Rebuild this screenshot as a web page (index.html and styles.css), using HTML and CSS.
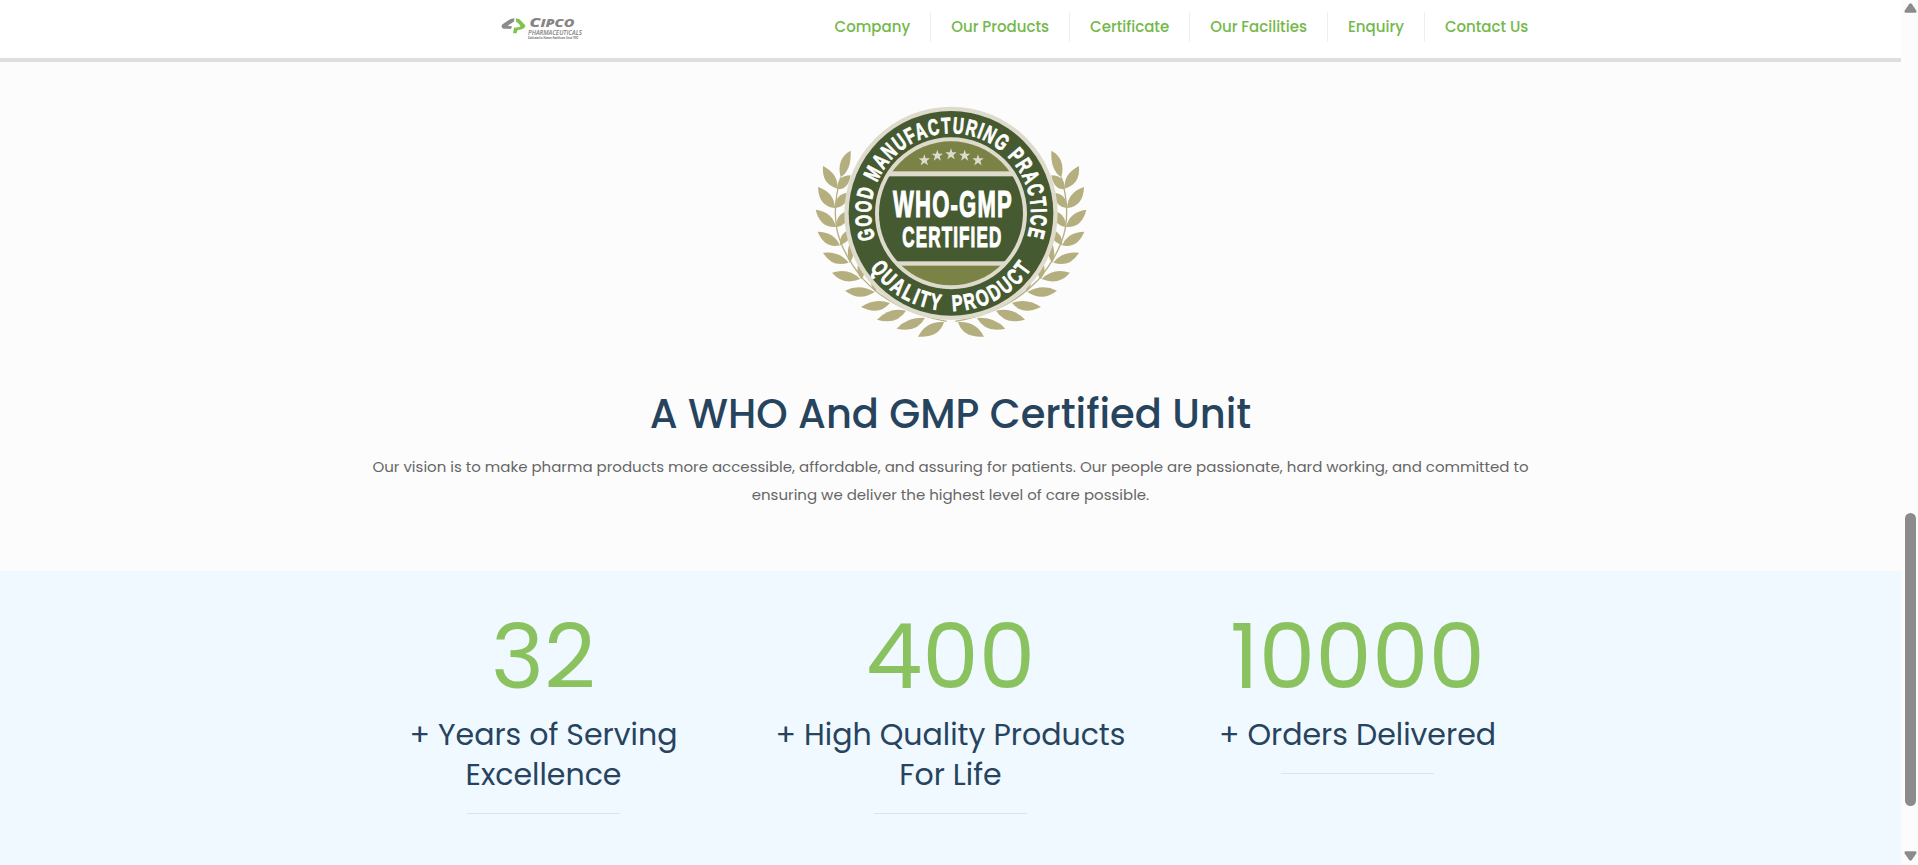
FILE: index.html
```html
<!DOCTYPE html>
<html lang="en">
<head>
<meta charset="utf-8">
<title>Cipco Pharmaceuticals</title>
<link rel="stylesheet" href="styles.css">
</head>
<body>
<div class="window">
<div class="page">
  <header class="header">
    <a class="logo" href="#">
      <svg width="84" height="28" viewBox="500 15 84 28">
        <path d="M514.500 18.300L510.500 19L502.200 24.500Q500.500 27.500 503.500 28.700L511 28.900L512 26.300L507.500 25.900L514 21.500Z" fill="#8b8b8b"/>
        <path d="M516 18.300L519.500 19.200L525.500 25.500Q525.500 29 517.500 30.200L516.500 33.300H513L514 27.700L520 27Q521 26 519.500 24.500L516 21.500Z" fill="#82c34f"/>
        <text x="529.500" y="27" class="logo-name" textLength="45" lengthAdjust="spacingAndGlyphs"><tspan font-size="12.500">C</tspan>IPCO</text>
        <text x="528" y="34.600" class="logo-sub" textLength="54" lengthAdjust="spacingAndGlyphs">PHARMACEUTICALS</text>
        <text x="528" y="38.800" class="logo-tag" textLength="50" lengthAdjust="spacingAndGlyphs">Dedicated to Human Healthcare Since 1992</text>
      </svg>
    </a>
    <nav class="nav">
      <a href="#">Company</a><a href="#">Our Products</a><a href="#">Certificate</a><a href="#">Our Facilities</a><a href="#">Enquiry</a><a href="#">Contact Us</a>
    </nav>
  </header>
  <main>
    <section class="certified">
      <svg class="badge" width="300" height="260" viewBox="0 0 900 780">
        <defs>
          <g id="branch">
            <path d="M122 262Q98 345 110 415Q125 490 190 568Q280 665 440 694" fill="none" stroke="#b5af80" stroke-width="4"/>
            <g fill="#b5af80">
              <path d="M152 182Q108 205 122 262Q155 240 152 182Z"/>
              <path d="M69 228Q64 282 112 296Q116 252 69 228Z"/>
              <path d="M54 291Q56 350 105 354Q102 306 54 291Z"/>
              <path d="M47 359Q60 414 108 411Q98 366 47 359Z"/>
              <path d="M53 425Q74 476 120 466Q102 426 53 425Z"/>
              <path d="M69 488Q96 534 146 518Q118 482 69 488Z"/>
              <path d="M96 548Q130 588 181 567Q146 532 96 548Z"/>
              <path d="M135 602Q178 636 224 606Q180 580 135 602Z"/>
              <path d="M183 651Q238 678 270 639Q224 622 183 651Z"/>
              <path d="M231 689Q290 706 318 662Q268 650 231 689Z"/>
              <path d="M290 716Q350 730 375 684Q322 680 290 716Z"/>
              <path d="M354 740Q418 744 432 696Q378 692 354 740Z"/>
              <path d="M152 256Q110 256 112 298Q145 300 152 256Z"/>
              <path d="M145 308Q106 310 104 354Q142 350 145 308Z"/>
              <path d="M146 362Q108 370 108 411Q148 405 146 362Z"/>
              <path d="M152 418Q116 430 120 466Q160 450 152 418Z"/>
              <path d="M153 450Q136 490 149 518Q172 490 153 450Z"/>
              <path d="M178 515Q164 545 184 568Q204 545 178 515Z"/>
              <path d="M214 556Q206 586 226 606Q240 580 214 556Z"/>
            </g>
          </g>
          <path id="star" d="M0-17L4-5L17-5L7 3L11 16L0 8L-11 16L-7 3L-17-5L-4-5Z"/>
          <clipPath id="disc"><circle cx="453" cy="370" r="216"/></clipPath>
          <path id="arc-top" d="M225.400 446.200A240 240 0 1 1 672 468"/>
          <path id="arc-bottom" d="M210 533.500A293 293 0 0 0 706 518"/>
        </defs>
        <use href="#branch"/>
        <use href="#branch" transform="matrix(-1 0 0 1 906 0)"/>
        <circle cx="453" cy="370" r="320" fill="#dedbcd"/>
        <circle cx="453" cy="370" r="307" fill="#455a30"/>
        <circle cx="453" cy="370" r="228" fill="#dedbcd"/>
        <g clip-path="url(#disc)">
          <rect x="230" y="150" width="450" height="94" fill="#7a8345"/>
          <rect x="230" y="259" width="450" height="255" fill="#455a30"/>
          <rect x="230" y="527" width="450" height="70" fill="#7a8345"/>
        </g>
        <g fill="#dedbcd"><use href="#star" x="373" y="210"/><use href="#star" x="412" y="196"/><use href="#star" x="453" y="192"/><use href="#star" x="494" y="196"/><use href="#star" x="534" y="210"/></g>
        <g class="badge-text">
          <text class="arc" font-size="68" textLength="905" lengthAdjust="spacingAndGlyphs"><textPath href="#arc-top">GOOD MANUFACTURING PRACTICE</textPath></text>
          <text class="arc lower" font-size="68" textLength="578" lengthAdjust="spacingAndGlyphs"><textPath href="#arc-bottom">QUALITY PRODUCT</textPath></text>
          <text class="center" x="279" y="380" font-size="108" textLength="360" lengthAdjust="spacingAndGlyphs">WHO-GMP</text>
          <text class="center" x="307" y="472" font-size="90" textLength="300" lengthAdjust="spacingAndGlyphs">CERTIFIED</text>
        </g>
      </svg>
      <h1>A WHO And GMP Certified Unit</h1>
      <p>Our vision is to make pharma products more accessible, affordable, and assuring for patients. Our people are passionate, hard working, and committed to ensuring we deliver the highest level of care possible.</p>
    </section>
    <section class="stats">
      <div class="stat"><div class="num">32</div><h2>+ Years of Serving Excellence</h2></div>
      <div class="stat"><div class="num">400</div><h2>+ High Quality Products For Life</h2></div>
      <div class="stat"><div class="num">10000</div><h2>+ Orders Delivered</h2></div>
    </section>
  </main>
</div>
<div class="scrollbar">
  <svg width="13" height="10" viewBox="0 0 13 10"><path d="M5 1.200Q6.500-.5 8 1.200L12.300 7.500Q13 9.800 11 9.800H2Q0 9.800.7 7.500Z" fill="#8b8b8b"/></svg>
  <div class="thumb"></div>
  <svg width="13" height="10" viewBox="0 0 13 10"><path d="M5 8.800Q6.500 10.500 8 8.800L12.300 2.500Q13 .2 11 .2H2Q0 .2.7 2.500Z" fill="#8b8b8b"/></svg>
</div>
</div>
</body>
</html>
```
FILE: styles.css
```css
* { box-sizing: border-box; }
body { margin: 0; background: #fcfcfc; font-family: Poppins, Inter, "Open Sans", sans-serif; color: #666; }
.window { display: flex; height: 865px; overflow: hidden; }
.page { flex: 1; }
.header { display: flex; height: 58px; padding-left: 500px; background: #fff; box-shadow: 0 4px 0 #dedede; }
.logo { width: 314.6px; padding-top: 15px; }
.logo svg { display: block; overflow: visible; }
.logo-name { font: italic 900 10.5px "Open Sans", sans-serif; fill: #858585; }
.logo-sub { font: italic 600 7.5px "Open Sans", sans-serif; fill: #808080; }
.logo-tag { font: italic 700 3.2px "Open Sans", sans-serif; fill: #777; }
.nav { display: flex; height: 30px; margin-top: 12px; }
.nav a { display: block; padding: 0 20px; border-right: 1px solid #eee; font-size: 15px; font-weight: 500; line-height: 30px; color: #74b84b; white-space: nowrap; text-decoration: none; }
.nav a:last-child { border: 0; }
.certified { height: 513px; padding-top: 32px; text-align: center; }
.badge { display: block; margin: 0 auto; position: relative; left: -1px; }
.badge-text { font-family: "Liberation Sans", Arial, sans-serif; font-weight: 700; fill: #fff; stroke: #fff; stroke-width: 2.5px; }
.arc { letter-spacing: 6px; }
.lower { letter-spacing: 10px; word-spacing: 16px; }
.center { letter-spacing: 6px; stroke-width: 3.5px; }
h1 { margin: 38px 0 0; font-size: 40px; font-weight: 500; line-height: 52px; color: #27445f; }
p { width: 1180px; margin: 13px auto 0; font-size: 15px; line-height: 28px; }
.stats { display: grid; grid-template-columns: repeat(3, 407px); justify-content: center; height: 294px; padding-top: 36px; background: #f0f9ff; text-align: center; }
.num { font-size: 90px; line-height: 100px; color: #8ac25f; }
h2 { margin: 8px 0 0; padding: 0 20px; font-size: 30px; font-weight: 400; line-height: 40px; color: #27445f; }
.stat::after { content: ""; display: block; width: 153px; height: 1px; margin: 18px auto 0; background: #dbe3ec; }
.scrollbar { display: flex; flex-direction: column; width: 17px; padding: 3px 0 4px 3px; }
.thumb { width: 11px; height: 293px; margin: 500px 0 45px 1px; border-radius: 6px; background: #8b8b8b; }
```
